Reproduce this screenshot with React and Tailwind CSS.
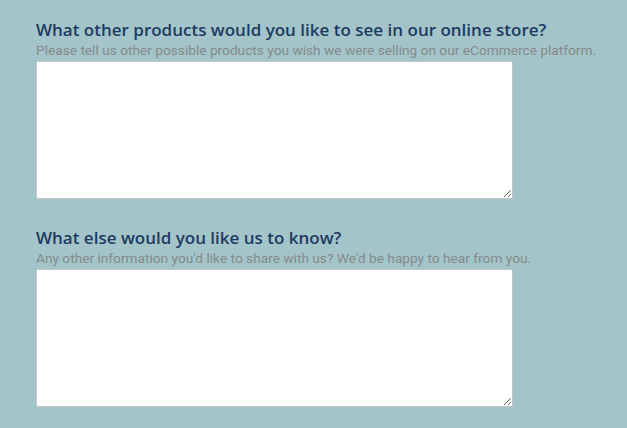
export default function App() {
  const Field = ({ title, sub, mt }) => (
    <div className={mt}>
      <h2 className="text-[17px] font-semibold leading-[20px] text-[#1d3b61]" style={{ fontFamily: "'Open Sans', sans-serif" }}>
        {title}
      </h2>
      <p className="text-[13.7px] leading-[18px] text-[#868a8c] mt-[1px] mb-[2px]" style={{ fontFamily: "Roboto, sans-serif" }}>{sub}</p>
      <textarea className="block w-[477px] h-[138px] bg-white border border-[#c4c4c4] outline-none" />
    </div>
  );
  return (
    <div className="w-[627px] h-[428px] bg-[#a3c4c9] pl-[36px] pt-[20px] overflow-hidden">
      <Field title="What other products would you like to see in our online store?" sub="Please tell us other possible products you wish we were selling on our eCommerce platform." />
      <Field mt="mt-[29px]" title="What else would you like us to know?" sub="Any other information you'd like to share with us? We'd be happy to hear from you." />
    </div>
  );
}
